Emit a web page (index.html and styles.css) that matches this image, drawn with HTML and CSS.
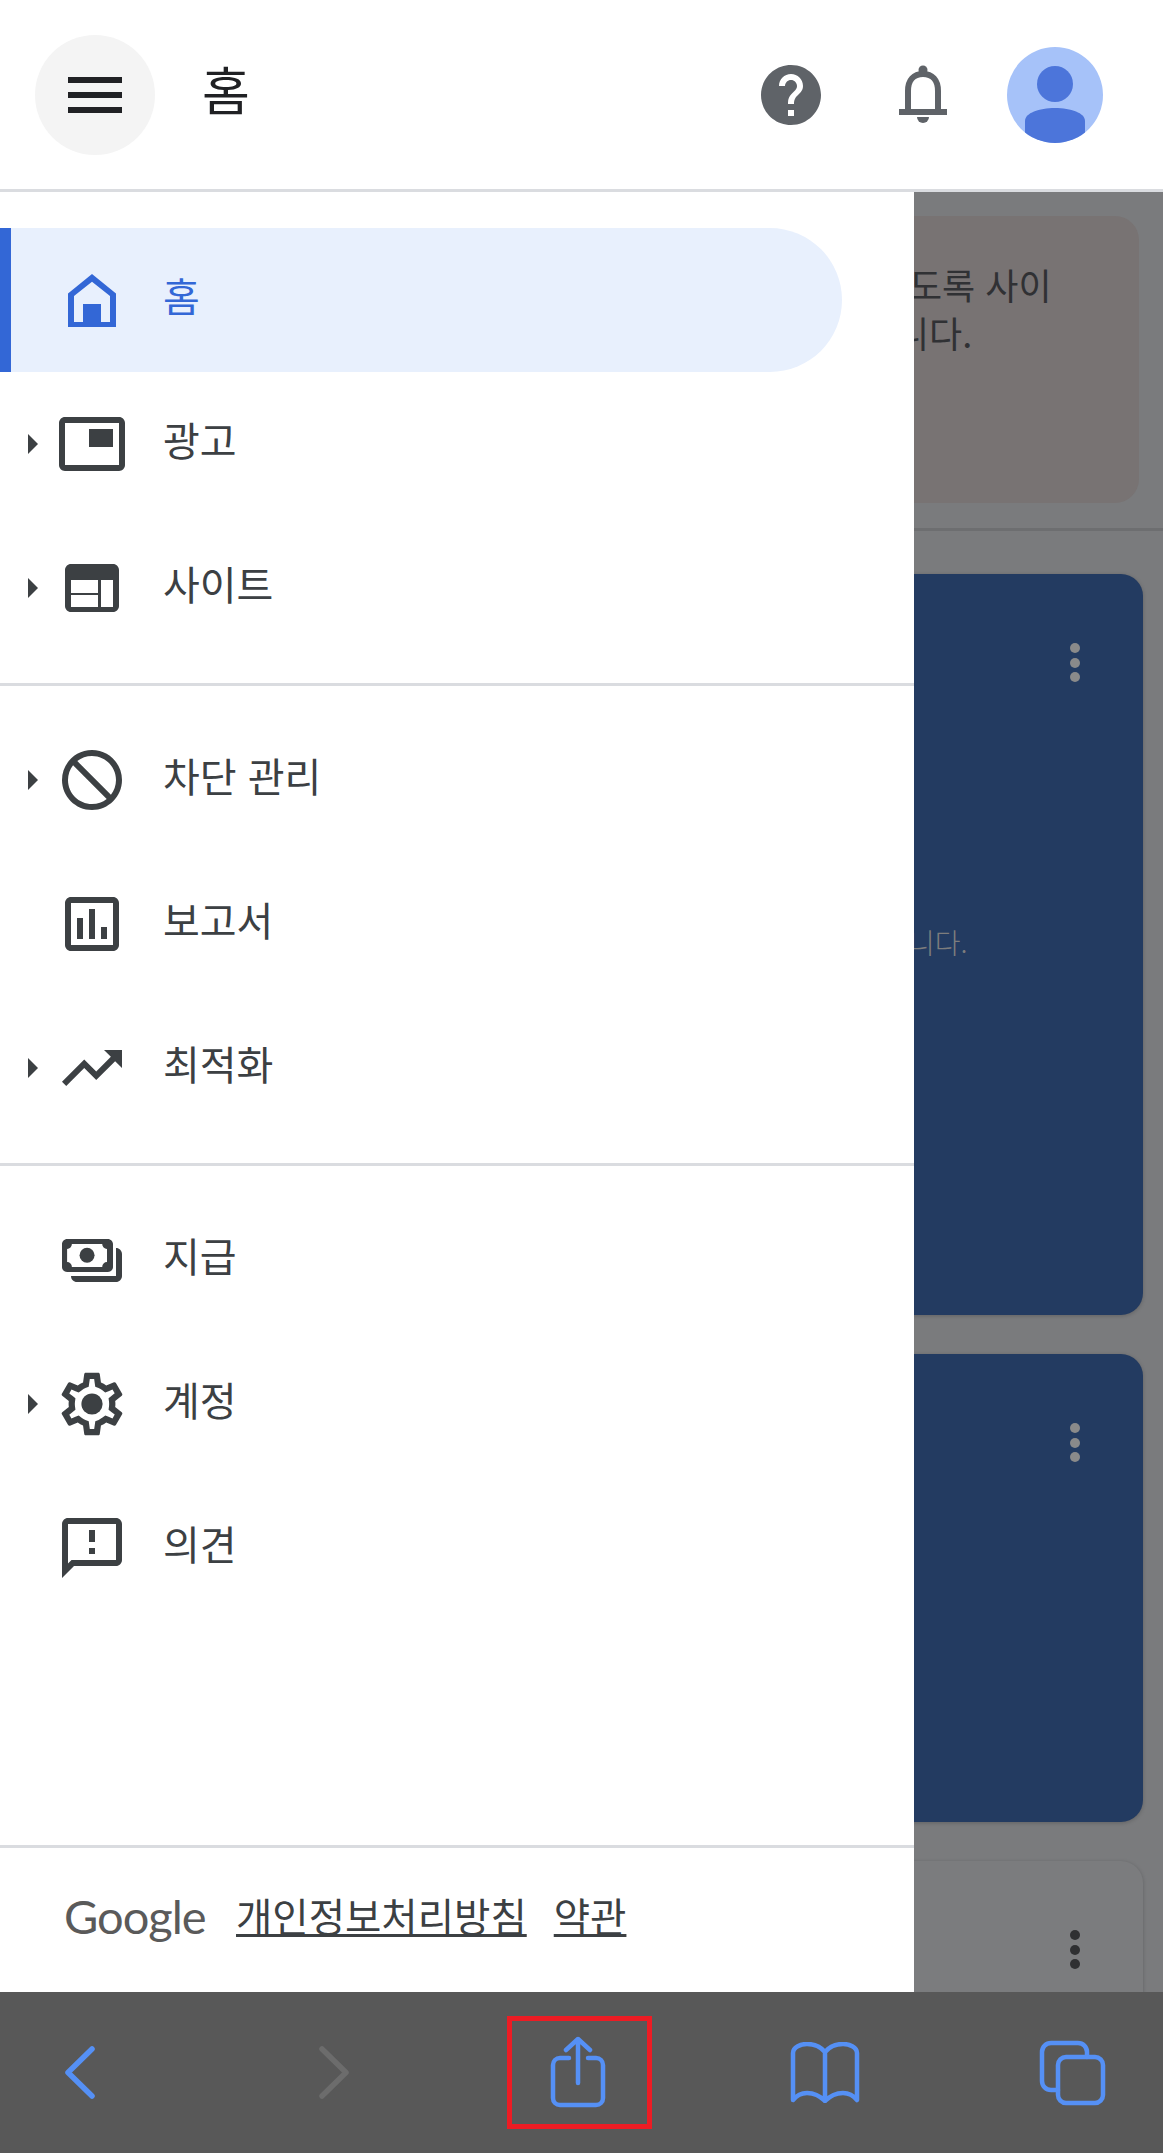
FILE: index.html
```html
<!DOCTYPE html>
<html lang="ko">
<head>
  <meta charset="UTF-8" />
  <meta name="viewport" content="width=device-width, initial-scale=1.0"/>
  <title>홈</title>
  <link rel="stylesheet" href="styles.css">
</head>
<body>
  <div class="page">
    <header class="topbar">
      <button class="menu_btn" aria-label="메뉴">
        <span></span><span></span><span></span>
      </button>
      <h1 class="topbar_title">홈</h1>
      <svg class="help_icon" viewBox="0 0 24 24"><path d="M12 2C6.48 2 2 6.48 2 12s4.48 10 10 10 10-4.48 10-10S17.52 2 12 2zm1 17h-2v-2h2v2zm2.07-7.75l-.9.92C13.45 12.9 13 13.5 13 15h-2v-.5c0-1.1.45-2.1 1.17-2.83l1.24-1.26c.37-.36.59-.86.59-1.41 0-1.1-.9-2-2-2s-2 .9-2 2H8c0-2.21 1.79-4 4-4s4 1.79 4 4c0 .88-.36 1.68-.93 2.25z"/></svg>
      <svg class="bell_icon" viewBox="0 0 48 60">
        <circle cx="24" cy="5" r="4.500"/>
        <path class="bell_body" d="M9 45V26C9 15 15 9 24 9s15 6 15 17v19"/>
        <rect x="0" y="44" width="48" height="6"/>
        <path d="M18 52h12a6 6 0 0 1-12 0z"/>
      </svg>
      <svg class="avatar" viewBox="0 0 96 96">
        <clipPath id="avatarClip"><circle cx="48" cy="48" r="48"/></clipPath>
        <circle cx="48" cy="48" r="48" fill="#a6c2f9"/>
        <g clip-path="url(#avatarClip)" fill="#4c75da">
          <circle cx="48" cy="37" r="18"/>
          <path d="M18 74c0-8 14-13 30-13s30 5 30 13v22H18z"/>
        </g>
      </svg>
    </header>

    <div class="content">
      <!-- page under the drawer, only the right edge is visible -->
      <div class="backdrop">
        <div class="notice_card">
          <p>도록 사이</p>
          <p class="notice_second">니다.</p>
        </div>
        <div class="notice_line"></div>
        <div class="card card_blue card_first">
          <div class="dots"><i></i><i></i><i></i></div>
          <p class="card_text">니다.</p>
        </div>
        <div class="card card_blue card_second">
          <div class="dots"><i></i><i></i><i></i></div>
        </div>
        <div class="card card_grey">
          <div class="dots"><i></i><i></i><i></i></div>
        </div>
      </div>

      <nav class="drawer">
        <div class="nav_group nav_first">
          <a class="nav_item active">
            <span class="caret_slot"></span>
            <svg class="nav_icon" viewBox="0 0 24 24"><path fill-rule="evenodd" d="M12 3.3l8 6.5V21H4V9.8zM12 5.9L6 10.7v8.6h3v-6h6v6h3v-8.6z"/></svg>
            <span class="nav_label">홈</span>
          </a>
          <a class="nav_item">
            <span class="caret_slot"><i class="caret"></i></span>
            <svg class="nav_icon" viewBox="0 0 24 24"><path d="M19 7h-8v6h8V7zm2-4H3c-1.1 0-2 .9-2 2v14c0 1.1.9 1.98 2 1.98h18c1.1 0 2-.88 2-1.98V5c0-1.1-.9-2-2-2zm0 16.01H3V4.98h18v14.03z"/></svg>
            <span class="nav_label">광고</span>
          </a>
          <a class="nav_item">
            <span class="caret_slot"><i class="caret"></i></span>
            <svg class="nav_icon" viewBox="0 0 24 24"><path fill-rule="evenodd" d="M19 4H5c-1.1 0-2 .9-2 2v12c0 1.1.9 2 2 2h14c1.1 0 2-.9 2-2V6c0-1.1-.9-2-2-2zM5 9.300h9v4.400H5zM5 14.300h9v4H5zM15 9.300h4v9h-4z"/></svg>
            <span class="nav_label">사이트</span>
          </a>
        </div>

        <div class="nav_group">
          <a class="nav_item">
            <span class="caret_slot"><i class="caret"></i></span>
            <svg class="nav_icon" viewBox="0 0 24 24"><path fill-rule="evenodd" d="M12 2C6.48 2 2 6.48 2 12s4.48 10 10 10 10-4.48 10-10S17.52 2 12 2zM20 12c0-4.42-3.58-8-8-8-1.85 0-3.55.63-4.900 1.690L18.310 16.900C19.370 15.550 20 13.850 20 12zM12 20c1.850 0 3.550-.63 4.900-1.690L5.690 7.100C4.630 8.450 4 10.150 4 12c0 4.420 3.580 8 8 8z"/></svg>
            <span class="nav_label">차단 관리</span>
          </a>
          <a class="nav_item">
            <span class="caret_slot"></span>
            <svg class="nav_icon" viewBox="0 0 24 24"><path d="M19 3H5c-1.1 0-2 .9-2 2v14c0 1.1.9 2 2 2h14c1.1 0 2-.9 2-2V5c0-1.1-.9-2-2-2zm0 16H5V5h14v14zM9 17H7v-7h2v7zm4 0h-2V7h2v10zm4 0h-2v-4h2v4z"/></svg>
            <span class="nav_label">보고서</span>
          </a>
          <a class="nav_item">
            <span class="caret_slot"><i class="caret"></i></span>
            <svg class="nav_icon" viewBox="0 0 24 24"><path d="M16 6l2.29 2.29-4.88 4.88-4-4L2 16.59 3.41 18l6-6 4 4 6.3-6.29L22 12V6z"/></svg>
            <span class="nav_label">최적화</span>
          </a>
        </div>

        <div class="nav_group nav_last">
          <a class="nav_item">
            <span class="caret_slot"></span>
            <svg class="nav_icon" viewBox="0 0 24 24">
              <path fill-rule="evenodd" d="M3.700 5h13.600c.9 0 1.700.8 1.700 1.700v7.600c0 .9-.8 1.700-1.700 1.700H3.700c-.9 0-1.700-.8-1.700-1.700V6.700C2 5.800 2.800 5 3.700 5zM5.300 6.700a1.600 1.600 0 0 1-1.600 1.600v4.400a1.600 1.600 0 0 1 1.600 1.600h10.100a1.600 1.600 0 0 1 1.600-1.600V8.300a1.600 1.600 0 0 1-1.600-1.600z"/>
              <circle cx="10.350" cy="10.400" r="2.500"/>
              <path d="M20 8c1.100 0 2 .9 2 2v7.300c0 1.100-.9 2-2 2H7c-1.100 0-2-.8-2-2h15z"/>
            </svg>
            <span class="nav_label">지급</span>
          </a>
          <a class="nav_item">
            <span class="caret_slot"><i class="caret"></i></span>
            <svg class="nav_icon" viewBox="0 0 24 24">
              <g transform="translate(12 12) scale(1.04) translate(-12 -12)">
                <path d="M19.43 12.98c.04-.32.07-.64.07-.98 0-.34-.03-.66-.07-.98l2.11-1.65c.19-.15.24-.42.12-.64l-2-3.46c-.09-.16-.26-.25-.44-.25-.06 0-.12.01-.17.03l-2.49 1c-.52-.4-1.08-.73-1.69-.98l-.38-2.65C14.46 2.18 14.25 2 14 2h-4c-.25 0-.46.18-.49.42l-.38 2.65c-.61.25-1.17.59-1.69.98l-2.49-1c-.06-.02-.12-.03-.18-.03-.17 0-.34.09-.43.25l-2 3.46c-.13.22-.07.49.12.64l2.11 1.65c-.04.32-.07.65-.07.98 0 .33.03.66.07.98l-2.11 1.65c-.19.15-.24.42-.12.64l2 3.46c.09.16.26.25.44.25.06 0 .12-.01.17-.03l2.49-1c.52.4 1.08.73 1.69.98l.38 2.65c.03.24.24.42.49.42h4c.25 0 .46-.18.49-.42l.38-2.65c.61-.25 1.17-.59 1.69-.98l2.49 1c.06.02.12.03.18.03.17 0 .34-.09.43-.25l2-3.46c.12-.22.07-.49-.12-.64l-2.11-1.65zm-1.98-1.71c.04.31.05.52.05.73 0 .21-.02.43-.05.73l-.14 1.13.89.7 1.08.84-.7 1.21-1.27-.51-1.04-.42-.9.68c-.43.32-.84.56-1.25.73l-1.06.43-.16 1.13-.2 1.35h-1.4l-.19-1.35-.16-1.13-1.06-.43c-.43-.18-.83-.41-1.23-.71l-.91-.7-1.06.43-1.27.51-.7-1.21 1.08-.84.89-.7-.14-1.13c-.03-.31-.05-.54-.05-.74s.02-.43.05-.73l.14-1.13-.89-.7-1.08-.84.7-1.21 1.27.51 1.04.42.9-.68c.43-.32.84-.56 1.25-.73l1.06-.43.16-1.13.2-1.35h1.39l.19 1.35.16 1.13 1.06.43c.43.18.83.41 1.23.71l.91.7 1.06-.43 1.27-.51.7 1.21-1.07.85-.89.7.14 1.13z"/>
                <circle cx="12" cy="12" r="3.400"/>
              </g>
            </svg>
            <span class="nav_label">계정</span>
          </a>
          <a class="nav_item">
            <span class="caret_slot"></span>
            <svg class="nav_icon" viewBox="0 0 24 24"><path d="M20 2H4c-1.1 0-1.99.9-1.99 2L2 22l4-4h14c1.1 0 2-.9 2-2V4c0-1.1-.9-2-2-2zm0 14H5.17L4 17.17V4h16v12zM11 12h2v2h-2zm0-6h2v4h-2z"/></svg>
            <span class="nav_label">의견</span>
          </a>
        </div>

        <footer class="drawer_footer">
          <span class="google_word">Google</span>
          <a class="footer_link">개인정보처리방침</a>
          <a class="footer_link">약관</a>
        </footer>
      </nav>
    </div>

    <div class="safari_bar">
      <svg class="bar_icon back_btn" viewBox="0 0 31 53"><path d="M28 3L4 26.500 28 50"/></svg>
      <svg class="bar_icon forward_btn" viewBox="0 0 31 53"><path d="M3 3l24 23.500L3 50"/></svg>
      <div class="share_box">
        <svg class="bar_icon share_btn" viewBox="0 0 56 72">
          <path d="M19 22h-9c-4 0-7 3-7 7v33c0 4 3 7 7 7h36c4 0 7-3 7-7V29c0-4-3-7-7-7h-8"/>
          <path d="M28 47V3M16 14L28 3l12 11"/>
        </svg>
      </div>
      <svg class="bar_icon book_btn" viewBox="0 0 70 61">
        <path d="M35 10C30 4 23 2 17 2 11 2 3 5 3 11v47c4-5 9-7 14-7 7 0 13 3 18 8 5-5 11-8 18-8 5 0 10 2 14 7V11c0-6-8-9-14-9-6 0-13 2-18 8zM35 10v49"/>
      </svg>
      <svg class="bar_icon tabs_btn" viewBox="0 0 67 66">
        <rect x="19" y="17" width="45" height="46" rx="8"/>
        <path d="M19 50h-7c-5 0-9-4-9-9V12c0-5 4-9 9-9h27c5 0 9 4 9 9v5"/>
      </svg>
    </div>
  </div>
</body>
</html>
```

FILE: styles.css
```css
body {
  margin: 0;
  font-family: "Noto Sans CJK KR", "Noto Sans", sans-serif;
  background: #fff;
}
p {
  margin: 0;
}
.page {
  width: 1163px;
  height: 2153px;
  display: flex;
  flex-direction: column;
  overflow: hidden;
}

/* top bar */
.topbar {
  height: 189px;
  flex: none;
  display: flex;
  align-items: center;
  padding-left: 35px;
  background: #fff;
  border-bottom: 3px solid #dadce0;
}
.menu_btn {
  width: 120px;
  height: 120px;
  flex: none;
  display: flex;
  flex-direction: column;
  align-items: center;
  justify-content: center;
  gap: 9px;
  padding: 0;
  border: none;
  border-radius: 50%;
  background: #f4f4f4;
}
.menu_btn span {
  width: 54px;
  height: 6px;
  background: #202124;
}
.topbar_title {
  flex: 1;
  margin: -11px 0 0 47px;
  font-size: 52px;
  font-weight: 400;
  line-height: 60px;
  color: #202124;
}
.help_icon {
  width: 72px;
  height: 72px;
  fill: #5f6368;
  margin-right: 72px;
}
.bell_icon {
  width: 48px;
  height: 60px;
  fill: #5f6368;
  margin-right: 60px;
}
.bell_body {
  fill: none;
  stroke: #5f6368;
  stroke-width: 6;
}
.avatar {
  width: 96px;
  height: 96px;
  margin-right: 60px;
}

/* page behind the drawer */
.content {
  position: relative;
  flex: 1;
  background: #7a7b7d;
  overflow: hidden;
}
.backdrop {
  padding-top: 24px;
}
.notice_card {
  height: 287px;
  margin: 0 24px;
  box-sizing: border-box;
  padding: 44px 0 0 885px;
  border-radius: 24px;
  background: #787373;
  font-size: 36px;
  line-height: 48px;
  color: #303134;
  white-space: nowrap;
}
.notice_second {
  margin-left: -13px;
}
.notice_line {
  height: 3px;
  margin: 25px 0 43px;
  background: #6d6e70;
}
.card {
  position: relative;
  margin: 0 20px 39px 24px;
  border-radius: 22px;
  box-shadow: 0 1px 4px rgba(0,0,0,0.2);
}
.card_blue {
  background: #233b61;
}
.card_first {
  height: 741px;
}
.card_second {
  height: 468px;
}
.card_grey {
  height: 300px;
  background: #7b7c7e;
}
.dots {
  position: absolute;
  right: 63px;
  top: 69px;
  display: flex;
  flex-direction: column;
  gap: 4.500px;
}
.dots i {
  width: 10px;
  height: 10px;
  border-radius: 50%;
  background: #8a8a8a;
}
.card_grey .dots i {
  background: #2f3032;
}
.card_text {
  padding: 348px 0 0 885px;
  font-size: 28px;
  line-height: 40px;
  font-weight: 300;
  color: #7d7d7d;
  white-space: nowrap;
}

/* drawer */
.drawer {
  position: absolute;
  left: 0;
  top: 0;
  bottom: 0;
  width: 914px;
  display: flex;
  flex-direction: column;
  background: #fff;
}
.nav_group {
  padding: 22px 0 23px;
  border-bottom: 3px solid #dadce0;
}
.nav_first {
  padding-top: 36px;
}
.nav_last {
  flex: 1;
}
.nav_item {
  width: 842px;
  height: 144px;
  box-sizing: border-box;
  display: flex;
  align-items: center;
  color: #3c4043;
}
.nav_item.active {
  border-left: 11px solid #3367d6;
  border-radius: 0 72px 72px 0;
  background: #e8f0fd;
  color: #3367d6;
}
.nav_item.active .caret_slot {
  width: 45px;
}
.caret_slot {
  width: 56px;
  flex: none;
  display: flex;
}
.caret {
  margin-left: 28px;
  border-left: 10px solid #3c4043;
  border-top: 10px solid transparent;
  border-bottom: 10px solid transparent;
}
.nav_icon {
  width: 72px;
  height: 72px;
  flex: none;
  fill: currentColor;
}
.nav_label {
  margin: -10px 0 0 35px;
  font-size: 40px;
  line-height: 56px;
  white-space: nowrap;
}
.drawer_footer {
  height: 144px;
  flex: none;
  display: flex;
  align-items: center;
  padding-left: 64px;
  font-size: 39.500px;
  color: #3c4043;
}
.google_word {
  width: 172px;
  margin-top: -9px;
  font-family: "Lato", sans-serif;
  font-size: 47px;
  line-height: 56px;
  letter-spacing: -1px;
  color: #5a5a5a;
}
.footer_link {
  margin: -10px 27px 0 0;
  line-height: 56px;
  text-decoration: underline;
  white-space: nowrap;
}

/* safari bar */
.safari_bar {
  height: 161px;
  flex: none;
  display: flex;
  align-items: center;
  padding-left: 64px;
  background: #585858;
}
.bar_icon {
  flex: none;
  fill: none;
  stroke: #5590f5;
  stroke-width: 4.500;
  stroke-linecap: round;
  stroke-linejoin: round;
}
.back_btn {
  width: 31px;
  height: 53px;
  stroke-width: 5.500;
}
.forward_btn {
  width: 31px;
  height: 53px;
  margin-left: 224px;
  stroke: #6c6c6c;
  stroke-width: 5.500;
}
.share_box {
  width: 145px;
  height: 113px;
  box-sizing: border-box;
  margin-left: 157px;
  padding: 15px 0 0 38px;
  border: 5px solid #ed1c24;
}
.share_btn {
  display: block;
  width: 56px;
  height: 72px;
}
.book_btn {
  width: 70px;
  height: 61px;
  margin-left: 138px;
}
.tabs_btn {
  width: 67px;
  height: 66px;
  margin-left: 179px;
}
```
